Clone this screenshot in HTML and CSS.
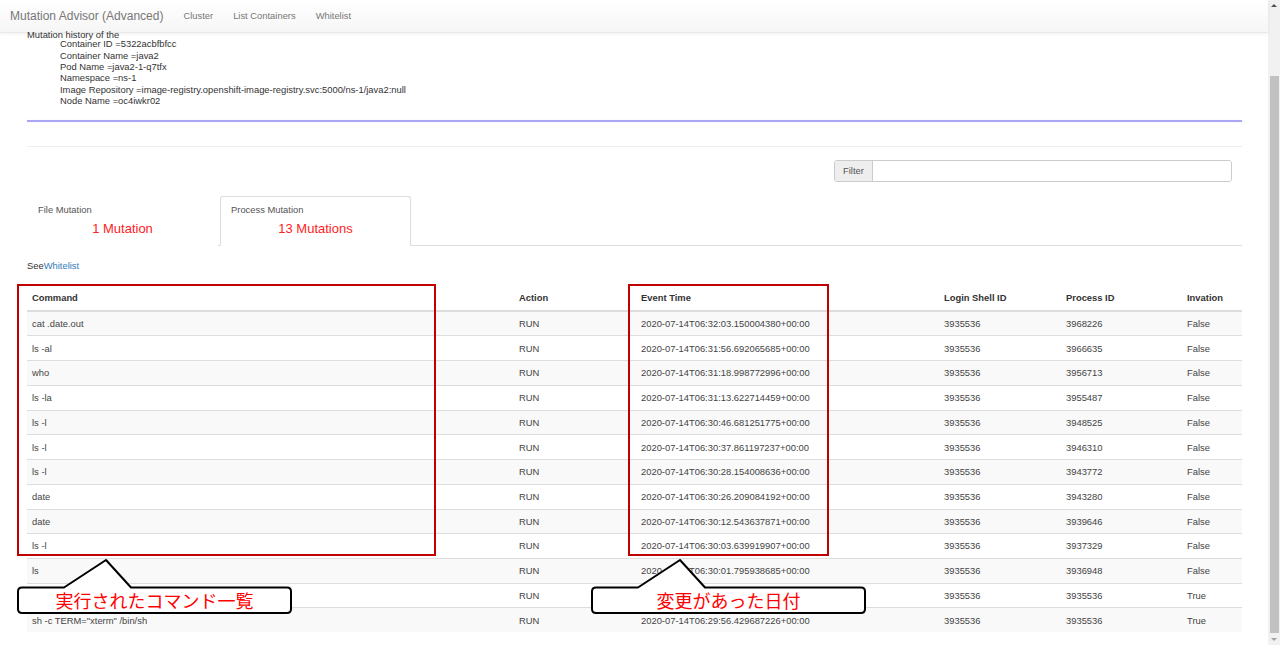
FILE: index.html
```html
<!DOCTYPE html>
<html lang="ja">
<head>
<meta charset="utf-8">
<title>Mutation Advisor (Advanced)</title>
<link rel="stylesheet" href="styles.css">
</head>
<body>
<div class="app">
  <div class="page">
    <nav class="navbar">
      <a class="brand">Mutation Advisor (Advanced)</a>
      <ul class="nav-links">
        <li><a>Cluster</a></li>
        <li><a>List Containers</a></li>
        <li><a>Whitelist</a></li>
      </ul>
    </nav>

    <main class="content">
      <div class="info">
        <div class="info-title">Mutation history of the</div>
        <ul class="info-list">
          <li>Container ID =5322acbfbfcc</li>
          <li>Container Name =java2</li>
          <li>Pod Name =java2-1-q7tfx</li>
          <li>Namespace =ns-1</li>
          <li>Image Repository =image-registry.openshift-image-registry.svc:5000/ns-1/java2:null</li>
          <li>Node Name =oc4iwkr02</li>
        </ul>
      </div>
      <div class="accent-line"></div>
      <hr class="divider">

      <div class="filter-row">
        <div class="input-group">
          <span class="addon">Filter</span>
          <input class="filter-input" type="text">
        </div>
      </div>

      <ul class="tabs">
        <li class="tab">
          <span class="tab-label">File Mutation</span>
          <span class="tab-count">1 Mutation</span>
        </li>
        <li class="tab active">
          <span class="tab-label">Process Mutation</span>
          <span class="tab-count">13 Mutations</span>
        </li>
      </ul>

      <p class="see">See<a class="link">Whitelist</a></p>

      <table class="mut-table">
        <colgroup>
          <col class="c-cmd"><col class="c-action"><col class="c-time"><col class="c-shell"><col class="c-pid"><col class="c-inv">
        </colgroup>
        <thead>
          <tr><th>Command</th><th>Action</th><th>Event Time</th><th>Login Shell ID</th><th>Process ID</th><th>Invation</th></tr>
        </thead>
        <tbody>
          <tr><td>cat .date.out</td><td>RUN</td><td>2020-07-14T06:32:03.150004380+00:00</td><td>3935536</td><td>3968226</td><td>False</td></tr>
          <tr><td>ls -al</td><td>RUN</td><td>2020-07-14T06:31:56.692065685+00:00</td><td>3935536</td><td>3966635</td><td>False</td></tr>
          <tr><td>who</td><td>RUN</td><td>2020-07-14T06:31:18.998772996+00:00</td><td>3935536</td><td>3956713</td><td>False</td></tr>
          <tr><td>ls -la</td><td>RUN</td><td>2020-07-14T06:31:13.622714459+00:00</td><td>3935536</td><td>3955487</td><td>False</td></tr>
          <tr><td>ls -l</td><td>RUN</td><td>2020-07-14T06:30:46.681251775+00:00</td><td>3935536</td><td>3948525</td><td>False</td></tr>
          <tr><td>ls -l</td><td>RUN</td><td>2020-07-14T06:30:37.861197237+00:00</td><td>3935536</td><td>3946310</td><td>False</td></tr>
          <tr><td>ls -l</td><td>RUN</td><td>2020-07-14T06:30:28.154008636+00:00</td><td>3935536</td><td>3943772</td><td>False</td></tr>
          <tr><td>date</td><td>RUN</td><td>2020-07-14T06:30:26.209084192+00:00</td><td>3935536</td><td>3943280</td><td>False</td></tr>
          <tr><td>date</td><td>RUN</td><td>2020-07-14T06:30:12.543637871+00:00</td><td>3935536</td><td>3939646</td><td>False</td></tr>
          <tr><td>ls -l</td><td>RUN</td><td>2020-07-14T06:30:03.639919907+00:00</td><td>3935536</td><td>3937329</td><td>False</td></tr>
          <tr><td>ls</td><td>RUN</td><td>2020-07-14T06:30:01.795938685+00:00</td><td>3935536</td><td>3936948</td><td>False</td></tr>
          <tr><td></td><td>RUN</td><td></td><td>3935536</td><td>3935536</td><td>True</td></tr>
          <tr><td>sh -c TERM="xterm" /bin/sh</td><td>RUN</td><td>2020-07-14T06:29:56.429687226+00:00</td><td>3935536</td><td>3935536</td><td>True</td></tr>
        </tbody>
      </table>
    </main>

    <svg class="annotations" width="1268" height="645" viewBox="0 0 1268 645">
      <rect class="mark" x="18" y="285" width="417" height="270"></rect>
      <rect class="mark" x="629" y="285" width="199" height="270"></rect>
      <path class="bubble" d="M64 587.5 L106 560 L131 587.5 L287 587.5 Q291 587.5 291 591.5 L291 609 Q291 613 287 613 L22 613 Q18 613 18 609 L18 591.5 Q18 587.5 22 587.5 Z"></path>
      <path class="bubble" d="M638 587.5 L680 560 L705 587.5 L861 587.5 Q865 587.5 865 591.5 L865 609 Q865 613 861 613 L596 613 Q592 613 592 609 L592 591.5 Q592 587.5 596 587.5 Z"></path>
      <text class="bubble-text" x="154.5" y="608">実行されたコマンド一覧</text>
      <text class="bubble-text" x="728.5" y="608">変更があった日付</text>
    </svg>
  </div>

  <div class="scrollbar">
    <div class="sb-btn"><span class="arrow-up"></span></div>
    <div class="sb-thumb"></div>
    <div class="sb-fill"></div>
    <div class="sb-btn"><span class="arrow-down"></span></div>
  </div>
</div>
</body>
</html>
```

FILE: styles.css
```css
html, body {
  margin: 0;
  padding: 0;
  height: 645px;
  overflow: hidden;
  background: #fff;
}

body {
  font-family: "Liberation Sans", Arial, sans-serif;
  font-size: 9.4px;
  line-height: 13.4px;
  color: #333;
}

.app {
  display: flex;
  height: 645px;
}

.page {
  flex: 1;
  position: relative;
  min-width: 0;
}

/* ---------- navbar ---------- */
.navbar {
  height: 32px;
  display: flex;
  align-items: center;
  background: linear-gradient(#ffffff, #f6f6f6);
  border-bottom: 1px solid #e9e9e9;
  box-shadow: 0 1px 4px rgba(0, 0, 0, 0.06);
  position: relative;
  z-index: 1;
}

.brand {
  font-size: 12px;
  color: #777;
  padding: 0 10px;
  line-height: 32px;
}

.nav-links {
  list-style: none;
  margin: 0;
  padding: 0;
  display: flex;
}

.nav-links a {
  display: block;
  padding: 0 10px;
  color: #777;
  font-size: 9.4px;
  line-height: 32px;
}

/* ---------- content ---------- */
.content {
  padding: 0 26px 0 27px;
}

.info {
  margin-top: -3px;
  position: relative;
  z-index: 2;
  line-height: 11.3px;
  color: #333;
}

.info-title {
  line-height: 10px;
}

.info-list {
  list-style: none;
  margin: -1.65px 0 0 0;
  padding: 0 0 0 33px;
}

.accent-line {
  margin-top: 14px;
  height: 2px;
  background: #aaa6f4;
  box-shadow: 0 0 1px #cfcdfa;
}

.divider {
  margin: 24px 0 0 0;
  border: 0;
  border-top: 1px solid #eeeeee;
  height: 0;
}

.filter-row {
  display: flex;
  justify-content: flex-end;
  padding-right: 10px;
  margin-top: 13px;
}

.input-group {
  display: flex;
  width: 398px;
  height: 22px;
  box-sizing: border-box;
  border: 1px solid #cccccc;
  border-radius: 3px;
  overflow: hidden;
}

.addon {
  background: #eeeeee;
  color: #555;
  padding: 0 8px;
  line-height: 20px;
  border-right: 1px solid #cccccc;
}

.filter-input {
  flex: 1;
  border: 0;
  outline: none;
  padding: 0 8px;
  font: inherit;
}

/* ---------- tabs ---------- */
.tabs {
  list-style: none;
  margin: 14px 0 0 0;
  padding: 0;
  display: flex;
  gap: 2px;
  border-bottom: 1px solid #dddddd;
  height: 49px;
}

.tab {
  width: 191px;
  height: 50px;
  box-sizing: border-box;
  border: 1px solid transparent;
  border-radius: 3px 3px 0 0;
  padding: 6.3px 10px 0 10px;
  display: flex;
  flex-direction: column;
  background: #fff;
}

.tab.active {
  border-color: #dddddd;
  border-bottom-color: #ffffff;
}

.tab-label {
  color: #555;
  line-height: 13.4px;
}

.tab-count {
  margin-top: 3px;
  font-size: 13px;
  line-height: 18px;
  color: #ff2222;
  text-align: center;
}

.see {
  margin: 13px 0 0 0;
  line-height: 13.4px;
}

.link {
  color: #337ab7;
}

/* ---------- table ---------- */
.mut-table {
  margin-top: 13.5px;
  width: 1215px;
  table-layout: fixed;
  border-collapse: collapse;
  border-spacing: 0;
}

.c-cmd { width: 487px; }
.c-action { width: 122px; }
.c-time { width: 303px; }
.c-shell { width: 122px; }
.c-pid { width: 121px; }
.c-inv { width: 60px; }

.mut-table th,
.mut-table td {
  text-align: left;
  padding: 5.2px 5px;
  line-height: 13.35px;
  white-space: nowrap;
  overflow: hidden;
}

.mut-table th {
  font-weight: bold;
  border-bottom: 2px solid #dddddd;
  color: #333;
}

.mut-table td {
  border-top: 1px solid #dddddd;
  color: #444;
}

.mut-table tbody tr:nth-child(odd) td {
  background: #f9f9f9;
}

/* ---------- annotations overlay ---------- */
.annotations {
  position: absolute;
  left: 0;
  top: 0;
  z-index: 5;
  pointer-events: none;
}

.mark {
  fill: none;
  stroke: #c00000;
  stroke-width: 2;
}

.bubble {
  fill: #ffffff;
  stroke: #000000;
  stroke-width: 2;
  stroke-linejoin: round;
}

.bubble-text {
  font-family: "Noto Sans CJK JP", "Liberation Sans", sans-serif;
  font-size: 18px;
  fill: #ff0000;
  text-anchor: middle;
}

/* ---------- scrollbar ---------- */
.scrollbar {
  width: 12px;
  background: #f1f1f1;
  display: flex;
  flex-direction: column;
  align-items: center;
}

.sb-btn {
  height: 12px;
  width: 12px;
  display: flex;
  align-items: center;
  justify-content: center;
}

.arrow-up {
  width: 0;
  height: 0;
  border-left: 3px solid transparent;
  border-right: 3px solid transparent;
  border-bottom: 3px solid #505050;
}

.arrow-down {
  width: 0;
  height: 0;
  border-left: 3px solid transparent;
  border-right: 3px solid transparent;
  border-top: 3px solid #a3a3a3;
}

.sb-thumb {
  margin-top: 64px;
  width: 9px;
  height: 558px;
  background: #c1c1c1;
}

.sb-fill {
  flex: 1;
}
```
